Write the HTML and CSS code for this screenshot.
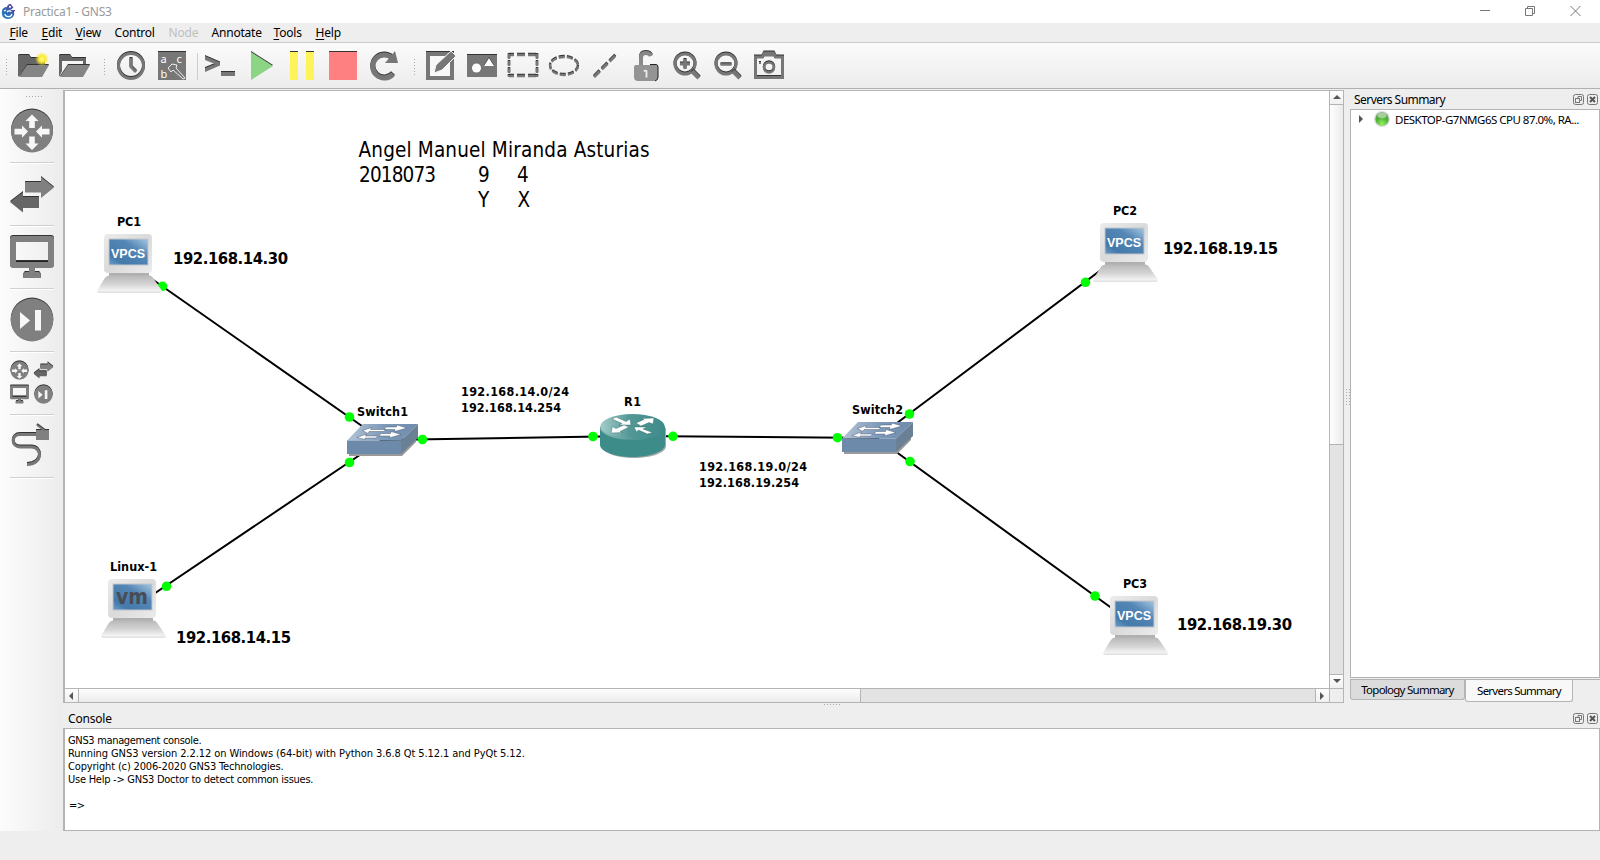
FILE: index.html
```html
<!DOCTYPE html>
<html lang="en">
<head>
<meta charset="utf-8">
<title>Practica1 - GNS3</title>
<link rel="stylesheet" href="styles.css">
</head>
<body>
<svg class="defs" width="0" height="0" aria-hidden="true">
  <defs>
    <linearGradient id="metal" x1="0" y1="0" x2="1" y2="1"><stop offset="0" stop-color="#ececec"/><stop offset=".5" stop-color="#dadada"/><stop offset="1" stop-color="#ececec"/></linearGradient>
    <linearGradient id="base" x1="0" y1="0" x2="0" y2="1"><stop offset="0" stop-color="#b8b8b8"/><stop offset=".5" stop-color="#d4d4d4"/><stop offset=".85" stop-color="#f2f2f2"/><stop offset="1" stop-color="#dedede"/></linearGradient>
    <linearGradient id="screen" x1="0" y1="1" x2="1" y2="0"><stop offset="0" stop-color="#6b9cc6"/><stop offset=".2" stop-color="#4479ab"/><stop offset=".65" stop-color="#5487b5"/><stop offset="1" stop-color="#a3c3df"/></linearGradient>
    <linearGradient id="swtop" x1="0" y1="0" x2="1" y2="0"><stop offset="0" stop-color="#b4c4d6"/><stop offset=".5" stop-color="#7f9bbb"/><stop offset="1" stop-color="#6e8bad"/></linearGradient>
    <linearGradient id="rtop" x1="0" y1="0" x2="1" y2="0"><stop offset="0" stop-color="#a6cdcb"/><stop offset=".45" stop-color="#539896"/><stop offset="1" stop-color="#3d8c8a"/></linearGradient>
    <linearGradient id="logo" x1="1" y1="0" x2="0" y2="1"><stop offset="0" stop-color="#7a2a94"/><stop offset=".45" stop-color="#3b62ad"/><stop offset="1" stop-color="#1686c8"/></linearGradient>
    <radialGradient id="glow"><stop offset="0" stop-color="#fffb9a"/><stop offset=".45" stop-color="#fbea28"/><stop offset="1" stop-color="#fbea28" stop-opacity="0"/></radialGradient>
    <radialGradient id="led" cx=".5" cy=".85" r=".8"><stop offset="0" stop-color="#8df55c"/><stop offset=".6" stop-color="#4fae37"/><stop offset="1" stop-color="#6aa35c"/></radialGradient>

    <symbol id="router" viewBox="0 0 44 44">
      <ellipse cx="22" cy="22" rx="21" ry="21.500" fill="#808080"/>
      <g fill="#f7f7f7"><path d="M22 5.500l6.500 6.500h-3.700v7h-5.600v-7h-3.700z"/><path d="M22 41l6.500-6.500h-3.700v-7h-5.600v7h-3.700z"/><path d="M18 22.500l-6-6v3.300H4.500v5.600H12v3.300z"/><path d="M26 22.500l6-6v3.300h7.500v5.600H32v3.300z"/></g>
    </symbol>
    <symbol id="arrows" viewBox="0 0 44 44">
      <path d="M15 10h16V5l13 10.500L31 26v-5.500H15z" fill="#808080"/>
      <path d="M29 25H13v-5L0 30l13 10.500V36h16z" fill="#666"/>
    </symbol>
    <symbol id="monitor" viewBox="0 0 44 44">
      <path fill-rule="evenodd" d="M3 1h38q3 0 3 3v26q0 3-3 3H3q-3 0-3-3V4q0-3 3-3zM6 7v20h32V7z" fill="#808080"/>
      <path d="M19 33h6v4h4q2 1 2 6H13q0-5 2-6h4z" fill="#808080"/><path d="M6 26.500h32" stroke="#222"/>
    </symbol>
    <symbol id="nextc" viewBox="0 0 44 44">
      <ellipse cx="22" cy="22" rx="21.300" ry="21.500" fill="#808080"/>
      <path d="M10 14l10 8.500L10 31zM25 12h6v20.500h-6z" fill="#f7f7f7"/>
    </symbol>
    <symbol id="pc" viewBox="0 0 66 60">
      <path d="M12 38h40v5H12z" fill="#b0b0b0"/>
      <rect x="7" y="0" width="48" height="39" rx="4" fill="url(#metal)"/>
      <rect x="11.500" y="4.500" width="40" height="27" fill="#c2c6cb"/>
      <rect x="12.500" y="5.500" width="38" height="25" fill="url(#screen)"/>
      <path d="M13 41.500h39q3 0 4.500 3l8 11.500q1.500 3-2.500 3H3q-4 0-2.500-3l7-11.500q2-3 5.500-3z" fill="url(#base)"/>
    </symbol>
    <symbol id="switch" viewBox="0 0 74 34">
      <path d="M2 29h52l15-15v4L55 32H2z" fill="#999"/>
      <path d="M16 0h55L54 16.500H0z" fill="url(#swtop)"/>
      <path d="M0 16.500h54.500V30H0z" fill="#6d8aab"/>
      <path d="M71 0v14L54 30V16.500z" fill="#6b8095"/>
      <path d="M15.500 6.500l9-3-1 2h15l-1.500 2H22l-1 2zM60 4l-10-3-.7 2H39l-2 2.500h11l-.5 2zM10 13.500l9.500-3.500-1 2h12l-1.500 2H18v1.500zM54 10.500l-10-3-.5 2H34L32 12h11l-1 2z" stroke="#34475e" stroke-width=".4" fill="#fff"/>
    </symbol>
    <symbol id="r1" viewBox="0 0 68 46">
      <path d="M2 14v18c0 7 15 12 32 12s32-5 32-12V14z" fill="#a2aaaa"/>
      <path d="M0 13v18c0 6 14 12 32.500 12S65 37 65 31V13z" fill="#3d8c8a"/>
      <ellipse cx="32.500" cy="13" rx="32.500" ry="13" fill="url(#rtop)"/>
      <path d="M0 13c2 7 14 11 32 11" fill="none" stroke="#67a5a3" stroke-width=".8"/>
      <g fill="#fff" stroke="#286563" stroke-width=".4">
        <path d="M12 5l4-2 10 4.500 4-2.500 1 6-12 0 3-1.500z"/><path d="M36 9l8-3.500-3-1 13-.5-1 6-4-1.500-8 3.500z"/>
        <path d="M11 19l1.500-6.500 3.500 2 8-3.500 5 2-9 4.500 3 1z"/><path d="M34 13l13 0-4 2 9.500 3.500-5 1.500-9-4-2 2z"/>
      </g>
    </symbol>
    <symbol id="dockbtns" viewBox="0 0 26 12">
      <g fill="none" stroke="#777"><rect x=".5" y=".5" width="10" height="10" rx="2"/><rect x="14.500" y=".5" width="10" height="10" rx="2"/><rect x="2.500" y="4.500" width="4" height="4"/><path d="M5 4V2.500h3.500v4H7"/></g>
      <path d="M17 3l5 5M22 3l-5 5" stroke="#555" stroke-width="2"/>
    </symbol>
  </defs>
</svg>

<header class="titlebar">
  <svg class="logo" viewBox="0 0 16 17">
    <path d="M1 8c0-2 2-4 5-4 0-2 2-3.500 4-3l1 2 1.500 1-1.500 2-2 1h5.500l-1.500 2c1 4-2 7-6 7S0 13 1 8z" fill="url(#logo)"/>
    <path d="M6 9c2-2 4-1 4 0M4 11c0 3 6 4 7 0M3 8l2-1" fill="none" stroke="#fff" stroke-width="1.200"/><circle cx="9" cy="3.800" r="1.100" fill="#fff"/>
  </svg>
  <span class="title">Practica1 - GNS3</span>
  <svg class="winbtns" viewBox="0 0 102 12" fill="none" stroke="#777"><path d="M0 5.500h10M90.500 1l10 10M100.500 1l-10 10"/><path d="M45.500 3.500h7v7h-7zM47.500 3V1.500h7v7H53"/></svg>
</header>

<nav class="menubar">
  <span class="m-file"><u>F</u>ile</span><span class="m-edit"><u>E</u>dit</span><span class="m-view"><u>V</u>iew</span><span class="m-control">Control</span><span class="m-node">Node</span><span class="m-annotate">Annotate</span><span class="m-tools"><u>T</u>ools</span><span class="m-help"><u>H</u>elp</span>
</nav>

<div class="toolbar">
  <i class="grip first"></i>
  <svg viewBox="0 0 32 32"><path d="M1 27V6l1-1h10l2 3h14v6H11z" fill="#666"/><path d="M10 15h22l-7 12H2z" fill="#858585"/><circle class="plain" cx="25" cy="9" r="7" fill="url(#glow)"/></svg>
  <svg viewBox="0 0 32 32"><path fill-rule="evenodd" d="M1 27V6l1-1h10l2 3h14v7h-3v-4H4v10z" fill="#666"/><path d="M10 15h22l-7 12H2z" fill="#858585"/></svg>
  <i class="grip"></i>
  <svg viewBox="0 0 32 32" fill="none" stroke="#777"><circle cx="16" cy="16" r="12.500" stroke-width="3"/><path d="M16 8v9l5 5" stroke-width="3"/></svg>
  <svg viewBox="0 0 32 32"><path d="M2 2h28v28H2z" fill="#777"/><g class="abc" fill="#fff"><text x="4.500" y="12.500">a</text><text x="20.500" y="12.500">c</text><text x="4.500" y="27.500">b</text></g><path class="plain" d="M12 18l4-4 5 1-1 3 9 10-2 1-10-9-2 2z" fill="#777" stroke="#eee"/></svg>
  <i class="sep"></i>
  <svg viewBox="0 0 32 32"><path d="M1 6l15 6.500v3L1 22v-4l10-4L1 10zM17 22h14v4H17z" fill="#777"/></svg>
  <svg viewBox="0 0 32 32"><path d="M6 2l22 14L6 30z" fill="#8bd584"/></svg>
  <svg viewBox="0 0 32 32"><path d="M4 2h8v28H4zM20 2h8v28h-8z" fill="#fff35c"/></svg>
  <svg viewBox="0 0 32 32"><path d="M2 2h28v28H2z" fill="#ff8080"/></svg>
  <svg viewBox="0 0 32 32"><path d="M25 24a11.500 11.500 0 1 1-1-16" fill="none" stroke="#777" stroke-width="5"/><path class="plain" d="M27 1l3 12H17z" fill="#777"/></svg>
  <i class="grip"></i>
  <svg viewBox="0 0 32 32"><path d="M3 4h24v24H3z" fill="#f7f7f7" stroke="#777" stroke-width="4"/><path class="plain" d="M9 23l2-8L26 1l5 5-14 14z" fill="#777" stroke="#f5f5f5"/></svg>
  <svg viewBox="0 0 32 32"><path d="M1 5h30v22H1z" fill="#777"/><circle class="plain" cx="10.500" cy="18" r="4.500" fill="#fff"/><path d="M18 16l5-8 5 8z" fill="#fff"/></svg>
  <svg viewBox="0 0 32 32" fill="none" stroke="#777" stroke-width="2.500"><path d="M2 5h28M2 26h28" stroke-dasharray="8 3" stroke-dashoffset="3"/><path d="M2 4v23M30 4v23" stroke-dasharray="5 2"/></svg>
  <svg viewBox="0 0 32 32" fill="none" stroke="#777"><ellipse cx="16" cy="16" rx="14" ry="9" stroke-width="2.300" stroke-dasharray="6 2.200"/></svg>
  <svg viewBox="0 0 32 32"><path d="M5 27L27 5" stroke="#777" stroke-width="3" stroke-dasharray="8 3"/></svg>
  <svg viewBox="0 0 32 32"><path d="M11 15V8q0-5 4.500-5t5.500 3" fill="none" stroke="#888" stroke-width="4"/><path class="plain" d="M6 15h20q2 0 2 2v10q0 4-4 4H8q-4 0-4-4V17q0-2 2-2z" fill="#949494"/><path class="plain" d="M20 14.500h6q2 0 2 2.500v10q0 3-3 4" fill="none" stroke="#222"/><path class="plain" d="M14 21.500q1-1.500 2.500-.5v6.500" fill="none" stroke="#eee" stroke-width="1.800"/></svg>
  <svg viewBox="0 0 32 32" fill="none" stroke="#777"><circle cx="14" cy="14" r="10" stroke-width="3"/><path d="M21 21l7 7" stroke-width="4.500"/><path d="M9 14h10M14 9v10" stroke-width="3"/></svg>
  <svg viewBox="0 0 32 32" fill="none" stroke="#777"><circle cx="14" cy="14" r="10" stroke-width="3"/><path d="M21 21l7 7" stroke-width="4.500"/><path d="M8.500 14.500h11" stroke-width="2.500"/></svg>
  <svg viewBox="0 0 32 32" fill="none" stroke="#777"><path d="M2.500 7h7l2-4h9l2 4h7v20.500h-27z" stroke-width="3"/><path class="plain" d="M10 3h12v3H10z" fill="#777"/><circle cx="16" cy="17.500" r="5" stroke-width="2.500"/><path d="M6 13h2" stroke-width="2"/></svg>
</div>

<main class="main">
  <aside class="devices">
    <i class="grip-h"></i>
    <div class="device"><svg><use href="#router"/></svg></div>
    <div class="device"><svg><use href="#arrows"/></svg></div>
    <div class="device"><svg><use href="#monitor"/></svg></div>
    <div class="device"><svg><use href="#nextc"/></svg></div>
    <div class="device"><svg viewBox="0 0 44 44"><use href="#router" x="0" y="0" width="19" height="19"/><use href="#arrows" x="23.500" y="-1" width="20" height="20"/><use href="#monitor" x="0" y="24" width="19" height="19"/><use href="#nextc" x="24" y="24" width="19" height="19"/></svg></div>
    <div class="device"><svg viewBox="0 0 44 44"><path d="M26 10.500H10c-9 0-9 12.500 0 12.500h11c12 0 12 17.500-4 17.500" fill="none" stroke="#777" stroke-width="3"/><path d="M26 6h13v10H26z" fill="#808080"/><path d="M27 1l8 6" stroke="#777" stroke-width="2"/></svg></div>
  </aside>

  <div class="work">
    <div class="upper">
      <section class="scene-frame">
        <svg class="scene" viewBox="65 91 1264 597">
          <g stroke="#000" stroke-width="2">
            <path d="M129 263L382 440M133 608L382 440M382 440L632 436L877 438M877 438L1125 252M877 438L1135 625" fill="none"/>
          </g>
          <g fill="#0f0">
            <circle cx="162.500" cy="286.300" r="4.800"/><circle cx="349.500" cy="417" r="4.800"/><circle cx="349.500" cy="462.500" r="4.800"/><circle cx="422.500" cy="439.500" r="4.800"/><circle cx="593" cy="436.500" r="4.800"/><circle cx="673" cy="436.300" r="4.800"/><circle cx="837.500" cy="437.700" r="4.800"/><circle cx="909.500" cy="414" r="4.800"/><circle cx="910" cy="461.500" r="4.800"/><circle cx="1085.500" cy="282.300" r="4.800"/><circle cx="1095" cy="596" r="4.800"/><circle cx="166.500" cy="586.300" r="4.800"/>
          </g>
          <use href="#pc" x="97" y="234" width="66" height="60"/>
          <use href="#pc" x="1093" y="223" width="66" height="60"/>
          <use href="#pc" x="1103" y="596" width="66" height="60"/>
          <use href="#pc" x="101" y="579" width="66" height="60"/>
          <use href="#switch" x="347" y="424" width="74" height="34"/>
          <use href="#switch" x="842" y="422" width="74" height="34"/>
          <use href="#r1" x="600" y="414" width="68" height="46"/>
          <g class="vpcs"><text x="111" y="258" textLength="34">VPCS</text><text x="1107" y="247" textLength="34">VPCS</text><text x="1117" y="620" textLength="34">VPCS</text></g>
          <text class="vm" x="116" y="603.500" textLength="32" lengthAdjust="spacingAndGlyphs">vm</text>
          <g class="heading">
            <text x="358.500" y="157" textLength="291">Angel Manuel Miranda Asturias</text>
            <text x="359" y="182" textLength="77">2018073</text><text x="478" y="182">9</text><text x="517" y="182">4</text>
            <text x="478" y="207">Y</text><text x="517.500" y="207">X</text>
          </g>
          <g class="label">
            <text x="117" y="226" textLength="24">PC1</text><text x="1113" y="215" textLength="24">PC2</text><text x="1123" y="588" textLength="24">PC3</text>
            <text x="357" y="416" textLength="51">Switch1</text><text x="852" y="414" textLength="51">Switch2</text>
            <text x="624" y="406" textLength="17">R1</text><text x="110" y="571" textLength="47">Linux-1</text>
            <text x="461" y="396" textLength="108">192.168.14.0/24</text><text x="461" y="412" textLength="100">192.168.14.254</text>
            <text x="699" y="471" textLength="108">192.168.19.0/24</text><text x="699" y="487" textLength="100">192.168.19.254</text>
          </g>
          <g class="ip">
            <text x="173" y="264" textLength="115">192.168.14.30</text><text x="1163" y="254" textLength="115">192.168.19.15</text>
            <text x="1177" y="630" textLength="115">192.168.19.30</text><text x="176" y="643" textLength="115">192.168.14.15</text>
          </g>
        </svg>
        <div class="vscroll"><b class="btn"><i class="tri up"></i></b><b class="thumb"></b><b class="btn down"><i class="tri dn"></i></b></div>
        <div class="hscroll"><b class="btn"><i class="tri lf"></i></b><b class="thumb"></b><b class="btn right"><i class="tri rt"></i></b></div>
        <div class="corner"></div>
      </section>
      <i class="split-v"></i>
      <section class="dock">
        <div class="dock-head"><span>Servers Summary</span><svg><use href="#dockbtns"/></svg></div>
        <div class="tree"><i class="tri rt"></i><svg class="led" viewBox="0 0 18 18"><circle cx="9" cy="9" r="8" fill="#ddd"/><circle cx="9" cy="9" r="6.700" fill="url(#led)"/><ellipse cx="9" cy="5.500" rx="4.500" ry="2.800" fill="#fff" opacity=".45"/></svg><span>DESKTOP-G7NMG6S CPU 87.0%, RA...</span></div>
        <div class="tabs"><span class="tab">Topology Summary</span><span class="tab active">Servers Summary</span></div>
      </section>
    </div>
    <section class="console">
      <i class="split-h"></i>
      <div class="console-head"><span>Console</span><svg><use href="#dockbtns"/></svg></div>
      <div class="console-body"><p class="l1">GNS3 management console.</p><p class="l2">Running GNS3 version 2.2.12 on Windows (64-bit) with Python 3.6.8 Qt 5.12.1 and PyQt 5.12.</p><p class="l3">Copyright (c) 2006-2020 GNS3 Technologies.</p><p class="l4">Use Help -&gt; GNS3 Doctor to detect common issues.</p><p class="prompt">=&gt;</p></div>
    </section>
  </div>
</main>
<footer class="status"></footer>
</body>
</html>
```

FILE: styles.css
```css
* { box-sizing: border-box; }
body { margin: 0; width: 1600px; height: 860px; overflow: hidden; display: flex; flex-direction: column; background: #eee; color: #000; font: 12px/16px "Noto Sans", "Open Sans", sans-serif; }
.defs { position: absolute; }
svg { display: block; flex: none; }

.titlebar { height: 23px; flex: none; background: #fff; display: flex; align-items: center; color: #999; }
.logo { width: 16px; height: 17px; margin-left: 1px; }
.title { margin-left: 6px; letter-spacing: -0.25px; padding-top: 1px; }
.winbtns { width: 102px; height: 12px; margin-left: auto; margin-right: 18px; margin-top: -2px; }

.menubar { height: 20px; flex: none; border-bottom: 1px solid #ccc; display: flex; align-items: center; padding-left: 9.500px; letter-spacing: -0.2px; }
.menubar u { text-underline-offset: 2px; }
.m-file { width: 32px; }
.m-edit { width: 34px; }
.m-view { width: 39px; }
.m-control { width: 54px; }
.m-node { width: 43px; color: #bebebe; }
.m-annotate { width: 62px; }
.m-tools { width: 42px; }

.toolbar { height: 46px; flex: none; border-bottom: 1px solid #b0b0b0; background: linear-gradient(#fbfbfb, #ececec); display: flex; align-items: center; padding-top: 1px; }
.toolbar svg { width: 32px; height: 32px; margin-right: 9px; }
.toolbar svg > *:not(.plain):not(.abc) { filter: drop-shadow(0 -1px 0 #333); }
.abc { font: 11px "Noto Sans", sans-serif; }
.grip { width: 4px; height: 17px; margin: 0 8px 0 4px; background: radial-gradient(circle, #aaa 0.8px, transparent 1px) 0 0 / 3px 3px; }
.grip.first { margin-left: 5px; }
.sep { width: 1px; height: 27px; background: #ccc; margin-right: 6px; }

.main { height: 742px; flex: none; display: flex; }
.devices { width: 63px; padding: 6px 9px 0 10px; background: linear-gradient(90deg, #fcfcfc, #ececec); }
.grip-h { display: block; width: 17px; height: 4px; margin: 0 0 10px 15px; background: radial-gradient(circle, #aaa 0.8px, transparent 1px) 0 0 / 3px 3px; }
.device { height: 55px; margin-bottom: 8px; border-bottom: 1px solid #fff; box-shadow: inset 0 -1px #d0d0d0; }
.device svg { width: 44px; height: 44px; filter: drop-shadow(0 -1px 0 #333); }

.work { width: 1537px; display: flex; flex-direction: column; }
.upper { height: 614px; padding-top: 1px; display: flex; }
.scene-frame { width: 1281px; height: 613px; background: #fff; border: 1px solid #b4b4b4; border-left-width: 2px; display: grid; grid-template-columns: 1264px 14px; grid-template-rows: 597px 14px; }
.scene { width: 1264px; height: 597px; }
.heading { font: 20.500px "DejaVu Sans Condensed", "DejaVu Sans", sans-serif; font-stretch: condensed; }
.label { font: bold 12.500px "DejaVu Sans Condensed", "DejaVu Sans", sans-serif; font-stretch: condensed; }
.ip { font: bold 16.500px "DejaVu Sans Condensed", "DejaVu Sans", sans-serif; font-stretch: condensed; }
.vpcs { font: bold 12.500px "Liberation Sans", sans-serif; fill: #fff; }
.vm { font: bold 22px "DejaVu Sans", sans-serif; fill: #484d55; }

.vscroll { border-left: 1px solid #b4b4b4; display: flex; flex-direction: column; background: #e3e3e3; }
.hscroll { border-top: 1px solid #b4b4b4; display: flex; background: #e3e3e3; }
.corner { border: solid #b4b4b4; border-width: 1px 0 0 1px; background: #eee; }
.btn { display: flex; align-items: center; justify-content: center; background: linear-gradient(#fff, #f0f0f0); }
.vscroll .btn { height: 14px; border-bottom: 1px solid #b4b4b4; padding-bottom: 1px; }
.vscroll .thumb { height: 340px; border-bottom: 1px solid #b4b4b4; background: linear-gradient(90deg, #fefefe, #ebebeb); }
.vscroll .down { margin-top: auto; border-bottom: 0; border-top: 1px solid #b4b4b4; }
.hscroll .btn { width: 14px; border-right: 1px solid #b4b4b4; padding-right: 2px; }
.hscroll .thumb { width: 782px; border-right: 1px solid #b4b4b4; background: linear-gradient(#fefefe, #ebebeb); }
.hscroll .right { margin-left: auto; border-right: 0; border-left: 1px solid #b4b4b4; }
.tri { width: 0; height: 0; border: 4px solid transparent; }
.tri.up { border-top: 0; border-bottom-color: #555; }
.tri.dn { border-bottom: 0; border-top-color: #555; }
.tri.lf { border-left: 0; border-right-color: #555; }
.tri.rt { border-right: 0; border-left-color: #555; }

.split-v { width: 6px; height: 17px; align-self: center; background: radial-gradient(circle, #aaa 0.8px, transparent 1px) 1px 0 / 3px 3px; }
.split-h { display: block; width: 17px; height: 4px; margin: 0 auto; background: radial-gradient(circle, #aaa 0.8px, transparent 1px) 0 0 / 3px 3px; }
.dock { width: 250px; display: flex; flex-direction: column; }
.dock-head { height: 19px; display: flex; align-items: center; justify-content: space-between; padding-left: 4px; letter-spacing: -0.55px; }
.dock-head svg, .console-head svg { width: 26px; height: 12px; margin-right: 1px; }
.tree { height: 569px; background: #fff; border: 1px solid #b4b4b4; display: flex; align-items: flex-start; padding: 2px 0 0 8px; font-size: 11.500px; letter-spacing: -0.51px; white-space: nowrap; }
.tree .tri { margin-top: 3px; }
.led { width: 18px; height: 18px; margin: -2px 4px 0 10px; }
.tabs { margin-top: 1px; height: 23px; border-top: 1px solid #b4b4b4; display: flex; align-items: flex-start; }
.tab { width: 115px; height: 20px; background: #dcdcdc; border: 1px solid #b4b4b4; border-top: 0; border-radius: 0 0 3px 3px; text-align: center; font-size: 11.500px; line-height: 19px; letter-spacing: -0.75px; white-space: nowrap; }
.tab.active { width: 108px; height: 22px; background: #f8f8f8; line-height: 22px; }

.console { height: 128px; display: flex; flex-direction: column; }
.console-head { height: 21px; display: flex; align-items: center; justify-content: space-between; padding: 2px 0 0 5px; letter-spacing: -0.2px; }
.console-body { height: 103px; background: #fff; border: 1px solid #b4b4b4; border-left-width: 2px; padding: 5px 0 0 3px; font: 11px/13px "DejaVu Sans Condensed", "DejaVu Sans", sans-serif; font-stretch: condensed; white-space: nowrap; }
.console-body p { margin: 0; letter-spacing: -0.5px; }
.console-body .l1 { letter-spacing: -0.33px; }
.console-body .l2 { letter-spacing: -0.08px; }
.console-body .l3 { letter-spacing: -0.16px; }
.console-body .l4 { letter-spacing: -0.25px; }
.console-body .prompt { margin-top: 13px; padding-left: 1px; }
.status { flex: 1; background: #eee; }
```
